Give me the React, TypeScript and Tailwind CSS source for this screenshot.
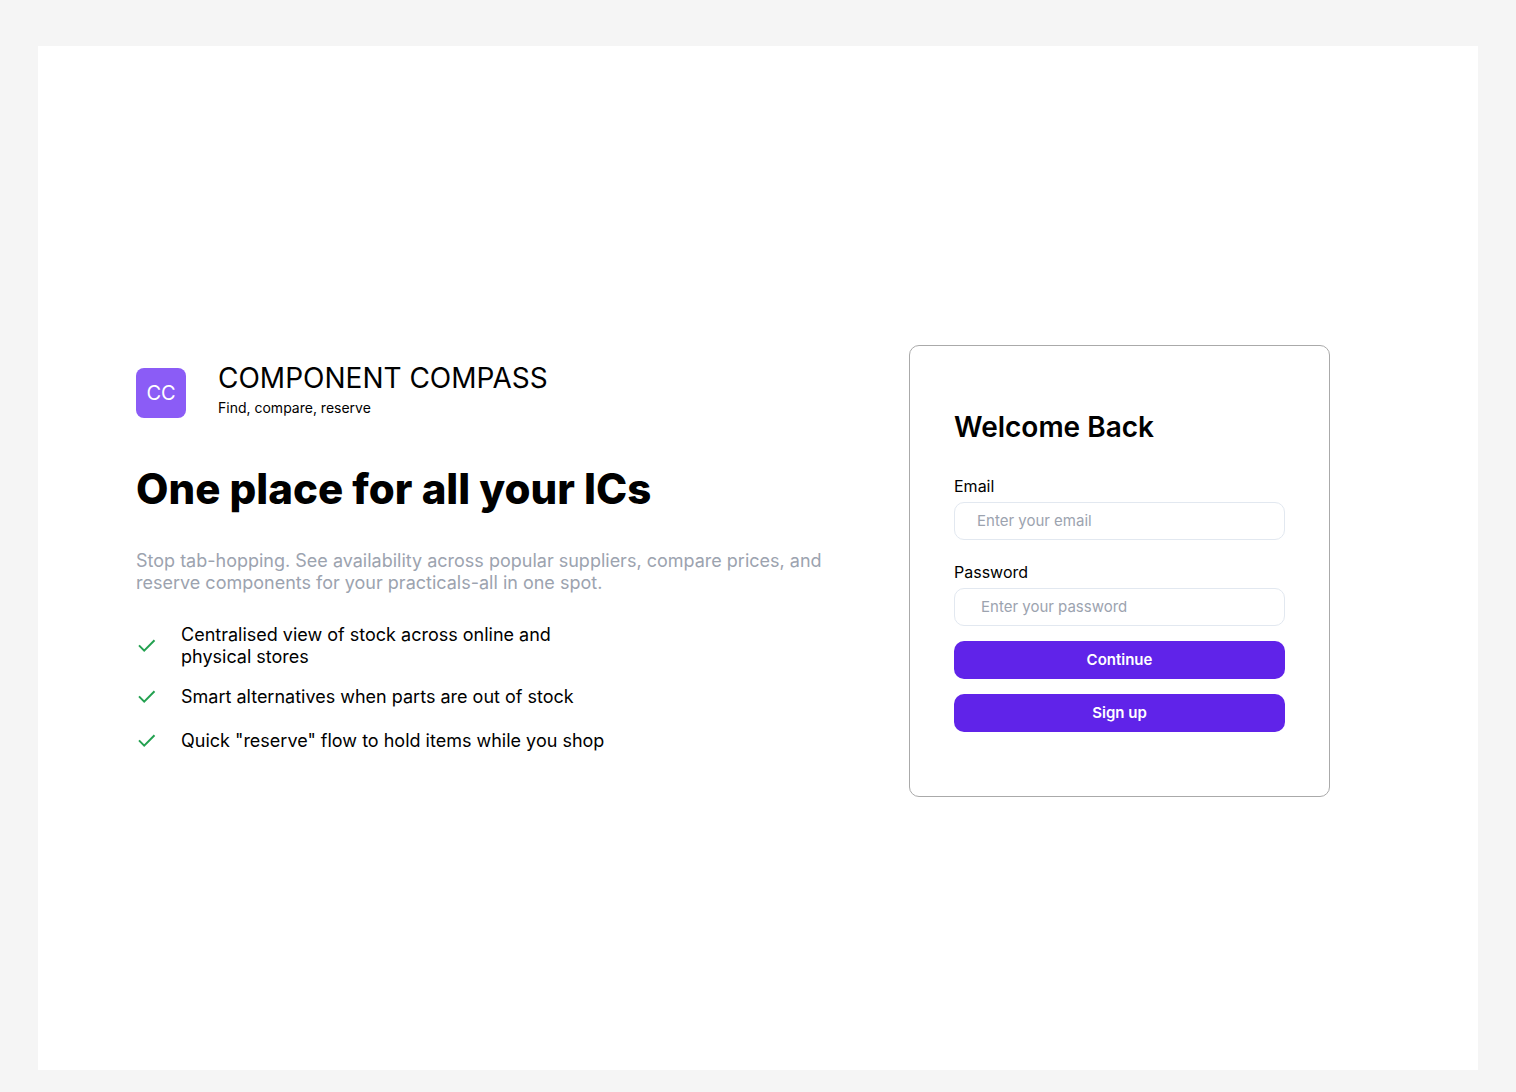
import React from "react";

const features = [
  "Centralised view of stock across online and physical stores",
  "Smart alternatives when parts are out of stock",
  'Quick "reserve" flow to hold items while you shop',
];

function Check() {
  return (
    <svg className="h-[22px] w-6 shrink-0" viewBox="0 0 24 22" fill="none" aria-hidden="true">
      <path d="M18.5 5.3L8.2 15.6L3 10.4" stroke="#23A150" strokeWidth="2" />
    </svg>
  );
}

function Field({ id, label, type, placeholder, inset }: { id: string; label: string; type: string; placeholder: string; inset: string }) {
  return (
    <div className="flex flex-col gap-1.5">
      <label htmlFor={id} className="text-base leading-5">{label}</label>
      <input
        id={id}
        type={type}
        placeholder={placeholder}
        className={`h-[38px] w-full rounded-[10px] border border-[#E2E8F0] bg-white pb-0.5 text-[15px] placeholder:text-[#9CA3AF] ${inset}`}
      />
    </div>
  );
}

function Action({ children }: { children: React.ReactNode }) {
  return (
    <button type="button" className="h-[38px] w-full rounded-[10px] bg-[#6023E9] text-[15px] font-semibold text-white">
      {children}
    </button>
  );
}

export default function App() {
  return (
    <div className="min-h-screen bg-[#f5f5f5] px-[38px] pt-[46px] pb-[22px] font-['Inter',sans-serif] text-black">
      <main className="flex min-h-[1024px] items-start justify-between bg-white pt-[299px] pr-[148px] pl-[98px]">
        <section className="w-[700px] pt-[15px]">
          <header className="flex items-end gap-8">
            <div className="flex size-[50px] items-center justify-center rounded-lg bg-[#8B5CF6] text-xl text-white">CC</div>
            <div>
              <h2 className="text-[28px] leading-9">COMPONENT COMPASS</h2>
              <p className="mt-0.5 text-sm leading-5">Find, compare, reserve</p>
            </div>
          </header>
          <h1 className="mt-11 text-[42px] leading-[54px] font-extrabold">One place for all your ICs</h1>
          <p className="mt-[34px] text-lg leading-[22px] text-[#9CA3AF]">
            Stop tab-hopping. See availability across popular suppliers, compare prices, and reserve components for your practicals-all in one spot.
          </p>
          <ul className="mt-[30px] flex w-[480px] flex-col gap-[18px] text-lg leading-[22px]">
            {features.map((f) => (
              <li key={f} className="flex items-center gap-[21px] last:mt-1">
                <Check />
                <span>{f}</span>
              </li>
            ))}
          </ul>
        </section>
        <form className="flex min-h-[452px] w-[421px] flex-col rounded-[10px] border border-[#aaaaaa] px-11 pt-[63px] pb-16">
          <h2 className="text-[28px] leading-9 font-semibold">Welcome Back</h2>
          <div className="mt-[31px] flex flex-col gap-[22px]">
            <Field id="email" label="Email" type="email" placeholder="Enter your email" inset="px-[22px]" />
            <Field id="password" label="Password" type="password" placeholder="Enter your password" inset="px-[26px]" />
          </div>
          <div className="mt-[15px] flex flex-col gap-[15px]">
            <Action>Continue</Action>
            <Action>Sign up</Action>
          </div>
        </form>
      </main>
    </div>
  );
}
